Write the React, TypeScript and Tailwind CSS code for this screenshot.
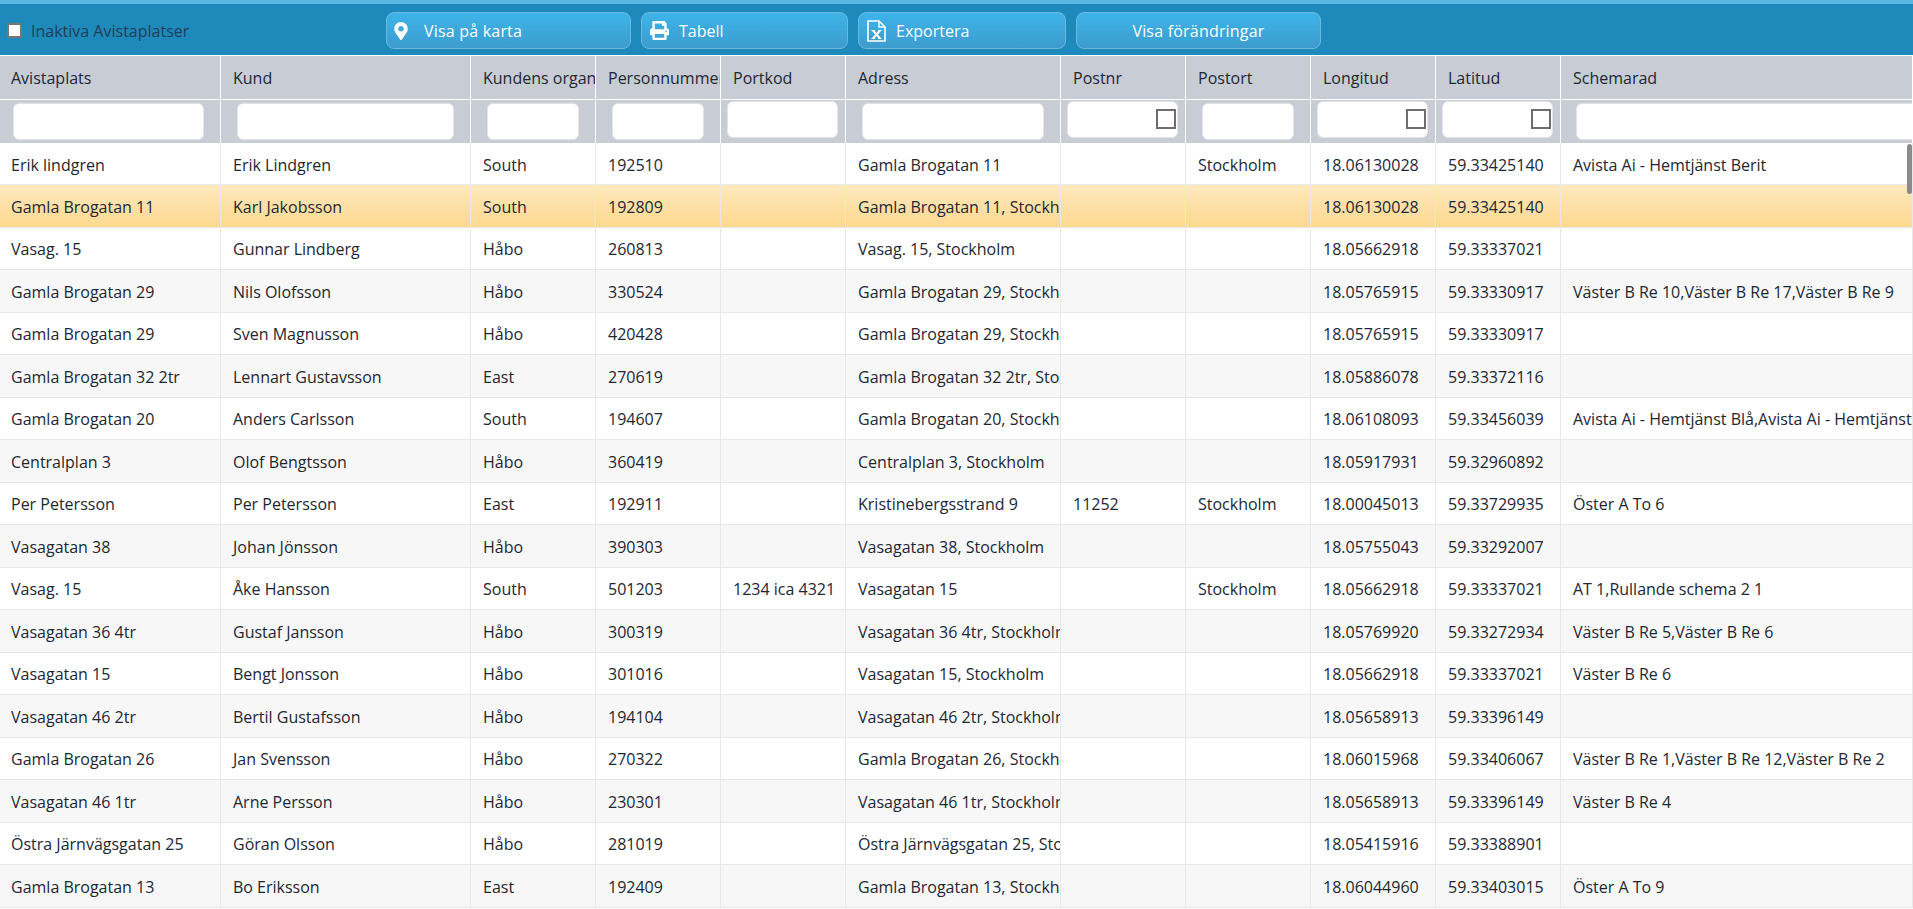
import { FaMapMarkerAlt, FaPrint } from "react-icons/fa"

// filter: normal inputs sit lower and inset, "box" inputs are wider and carry the checkbox
const columns = [
    { title: "Avistaplats", w: "w-[221px]", pad: "pl-[11px]", filter: "mt-[3px] ml-[13px] mr-[16px]", box: false },
    { title: "Kund", w: "w-[250px]", pad: "pl-[12px]", filter: "mt-[3px] ml-[16px] mr-[16px]", box: false },
    { title: "Kundens organisation", w: "w-[125px]", pad: "pl-[12px]", filter: "mt-[3px] ml-[16px] mr-[16px]", box: false },
    { title: "Personnummer", w: "w-[125px]", pad: "pl-[12px]", filter: "mt-[3px] ml-[16px] mr-[16px]", box: false },
    { title: "Portkod", w: "w-[125px]", pad: "pl-[12px]", filter: "mt-[1px] ml-[6px] mr-[7px]", box: false },
    { title: "Adress", w: "w-[215px]", pad: "pl-[12px]", filter: "mt-[3px] ml-[16px] mr-[16px]", box: false },
    { title: "Postnr", w: "w-[125px]", pad: "pl-[12px]", filter: "mt-[1px] ml-[6px] mr-[7px]", box: true },
    { title: "Postort", w: "w-[125px]", pad: "pl-[12px]", filter: "mt-[3px] ml-[16px] mr-[16px]", box: false },
    { title: "Longitud", w: "w-[125px]", pad: "pl-[12px]", filter: "mt-[1px] ml-[6px] mr-[7px]", box: true },
    { title: "Latitud", w: "w-[125px]", pad: "pl-[12px]", filter: "mt-[1px] ml-[6px] mr-[7px]", box: true },
    { title: "Schemarad", w: "w-[352px]", pad: "pl-[12px]", filter: "mt-[3px] ml-[15px] mr-[-40px]", box: false },
]

const rows = [
    ["Erik lindgren", "Erik Lindgren", "South", "192510", "", "Gamla Brogatan 11", "", "Stockholm", "18.06130028", "59.33425140", "Avista Ai - Hemtjänst Berit"],
    ["Gamla Brogatan 11", "Karl Jakobsson", "South", "192809", "", "Gamla Brogatan 11, Stockholm", "", "", "18.06130028", "59.33425140", ""],
    ["Vasag. 15", "Gunnar Lindberg", "Håbo", "260813", "", "Vasag. 15, Stockholm", "", "", "18.05662918", "59.33337021", ""],
    ["Gamla Brogatan 29", "Nils Olofsson", "Håbo", "330524", "", "Gamla Brogatan 29, Stockholm", "", "", "18.05765915", "59.33330917", "Väster B Re 10,Väster B Re 17,Väster B Re 9"],
    ["Gamla Brogatan 29", "Sven Magnusson", "Håbo", "420428", "", "Gamla Brogatan 29, Stockholm", "", "", "18.05765915", "59.33330917", ""],
    ["Gamla Brogatan 32 2tr", "Lennart Gustavsson", "East", "270619", "", "Gamla Brogatan 32 2tr, Stockholm", "", "", "18.05886078", "59.33372116", ""],
    ["Gamla Brogatan 20", "Anders Carlsson", "South", "194607", "", "Gamla Brogatan 20, Stockholm", "", "", "18.06108093", "59.33456039", "Avista Ai - Hemtjänst Blå,Avista Ai - Hemtjänst Röd"],
    ["Centralplan 3", "Olof Bengtsson", "Håbo", "360419", "", "Centralplan 3, Stockholm", "", "", "18.05917931", "59.32960892", ""],
    ["Per Petersson", "Per Petersson", "East", "192911", "", "Kristinebergsstrand 9", "11252", "Stockholm", "18.00045013", "59.33729935", "Öster A To 6"],
    ["Vasagatan 38", "Johan Jönsson", "Håbo", "390303", "", "Vasagatan 38, Stockholm", "", "", "18.05755043", "59.33292007", ""],
    ["Vasag. 15", "Åke Hansson", "South", "501203", "1234 ica 4321", "Vasagatan 15", "", "Stockholm", "18.05662918", "59.33337021", "AT 1,Rullande schema 2 1"],
    ["Vasagatan 36 4tr", "Gustaf Jansson", "Håbo", "300319", "", "Vasagatan 36 4tr, Stockholm", "", "", "18.05769920", "59.33272934", "Väster B Re 5,Väster B Re 6"],
    ["Vasagatan 15", "Bengt Jonsson", "Håbo", "301016", "", "Vasagatan 15, Stockholm", "", "", "18.05662918", "59.33337021", "Väster B Re 6"],
    ["Vasagatan 46 2tr", "Bertil Gustafsson", "Håbo", "194104", "", "Vasagatan 46 2tr, Stockholm", "", "", "18.05658913", "59.33396149", ""],
    ["Gamla Brogatan 26", "Jan Svensson", "Håbo", "270322", "", "Gamla Brogatan 26, Stockholm", "", "", "18.06015968", "59.33406067", "Väster B Re 1,Väster B Re 12,Väster B Re 2"],
    ["Vasagatan 46 1tr", "Arne Persson", "Håbo", "230301", "", "Vasagatan 46 1tr, Stockholm", "", "", "18.05658913", "59.33396149", "Väster B Re 4"],
    ["Östra Järnvägsgatan 25", "Göran Olsson", "Håbo", "281019", "", "Östra Järnvägsgatan 25, Stockholm", "", "", "18.05415916", "59.33388901", ""],
    ["Gamla Brogatan 13", "Bo Eriksson", "East", "192409", "", "Gamla Brogatan 13, Stockholm", "", "", "18.06044960", "59.33403015", "Öster A To 9"],
]

const btn = "h-[37px] rounded-lg border border-[#6db9de] bg-gradient-to-b from-[#3db4e9] to-[#3d9ccd] flex items-center text-white text-[16px]"

const ExcelIcon = () => (
    <svg viewBox="0 0 19 22" className="w-[19px] h-[22px] ml-[8px]" fill="none" stroke="white">
        <path d="M1 1 H12 L18 7 V21 H1 Z" strokeWidth="1.6" />
        <path d="M12 1 V7 H18" strokeWidth="1.4" />
        <path d="M6 10.5 L13 18.5 M13 10.5 L6 18.5" strokeWidth="2" />
        <path d="M4.5 10.5 H8 M11 10.5 H14.5 M4.5 18.5 H8 M11 18.5 H14.5" strokeWidth="1" />
    </svg>
)

const App = () => {
    return (
        <div className="w-[1913px] h-[909px] overflow-hidden bg-white relative font-['Open_Sans',sans-serif] text-[16px] text-[#1d2733]">
            <div className="h-[4px] bg-[#5bb8e6]"></div>
            <div className="h-[51px] bg-[#1e8abb] flex items-start pt-[8px]">
                <div className="w-[386px] h-[37px] flex items-center">
                    <input type="checkbox" className="ml-[7px] w-[15px] h-[15px] appearance-none bg-white border-2 border-[#767676] rounded-[1px]" />
                    <span className="ml-[9px] text-[#1f3f57]">Inaktiva Avistaplatser</span>
                </div>
                <div className={`${btn} w-[245px]`}>
                    <FaMapMarkerAlt className="ml-[7px] w-[14px] h-[18px]" />
                    <span className="ml-[16px] tracking-[0.2px]">Visa på karta</span>
                </div>
                <div className={`${btn} w-[207px] ml-[10px]`}>
                    <FaPrint className="ml-[7px] w-[21px] h-[19px]" />
                    <span className="ml-[9px]">Tabell</span>
                </div>
                <div className={`${btn} w-[208px] ml-[10px]`}>
                    <ExcelIcon />
                    <span className="ml-[10px]">Exportera</span>
                </div>
                <div className={`${btn} w-[245px] ml-[10px] justify-center`}>
                    <span className="tracking-[0.2px]">Visa förändringar</span>
                </div>
            </div>
            <div className="flex h-[45px] bg-[#c8cdd5] border-y border-white">
                {columns.map((c, i) => (
                    <div key={i} className={`${c.w} ${c.pad} shrink-0 border-r border-white flex items-center overflow-hidden whitespace-nowrap`}>
                        {c.title}
                    </div>
                ))}
            </div>
            <div className="flex h-[43px] bg-[#c8cdd5]">
                {columns.map((c, i) => (
                    <div key={i} className={`${c.w} shrink-0 border-r border-white overflow-hidden`}>
                        <div className={`${c.filter} relative h-[37px]`}>
                            <input type="text" className="block w-full h-full bg-white rounded-md border border-[#e2e4e8]" />
                            {c.box && <span className="absolute right-[2px] top-[8px] w-[20px] h-[20px] border-[2.5px] border-[#6d6d6d]"></span>}
                        </div>
                    </div>
                ))}
            </div>
            {rows.map((r, i) => (
                <div
                    key={i}
                    className={`flex ${i === 0 ? "h-[42px]" : "h-[42.5px]"} border-b border-[#e8e8e8] ${i === 1 ? "bg-gradient-to-b from-[#fee8bd] to-[#fed98f]" : i % 2 === 1 ? "bg-[#f7f7f7]" : "bg-white"}`}
                >
                    {columns.map((c, j) => (
                        <div key={j} className={`${c.w} ${c.pad} pt-[2px] shrink-0 border-r border-[#e8e8e8] flex items-center overflow-hidden whitespace-nowrap`}>
                            {r[j]}
                        </div>
                    ))}
                </div>
            ))}
            <div className="absolute left-[1907px] top-[144px] w-[5px] h-[50px] rounded bg-[#8a8a8a]"></div>
        </div>
    )
}

export default App
